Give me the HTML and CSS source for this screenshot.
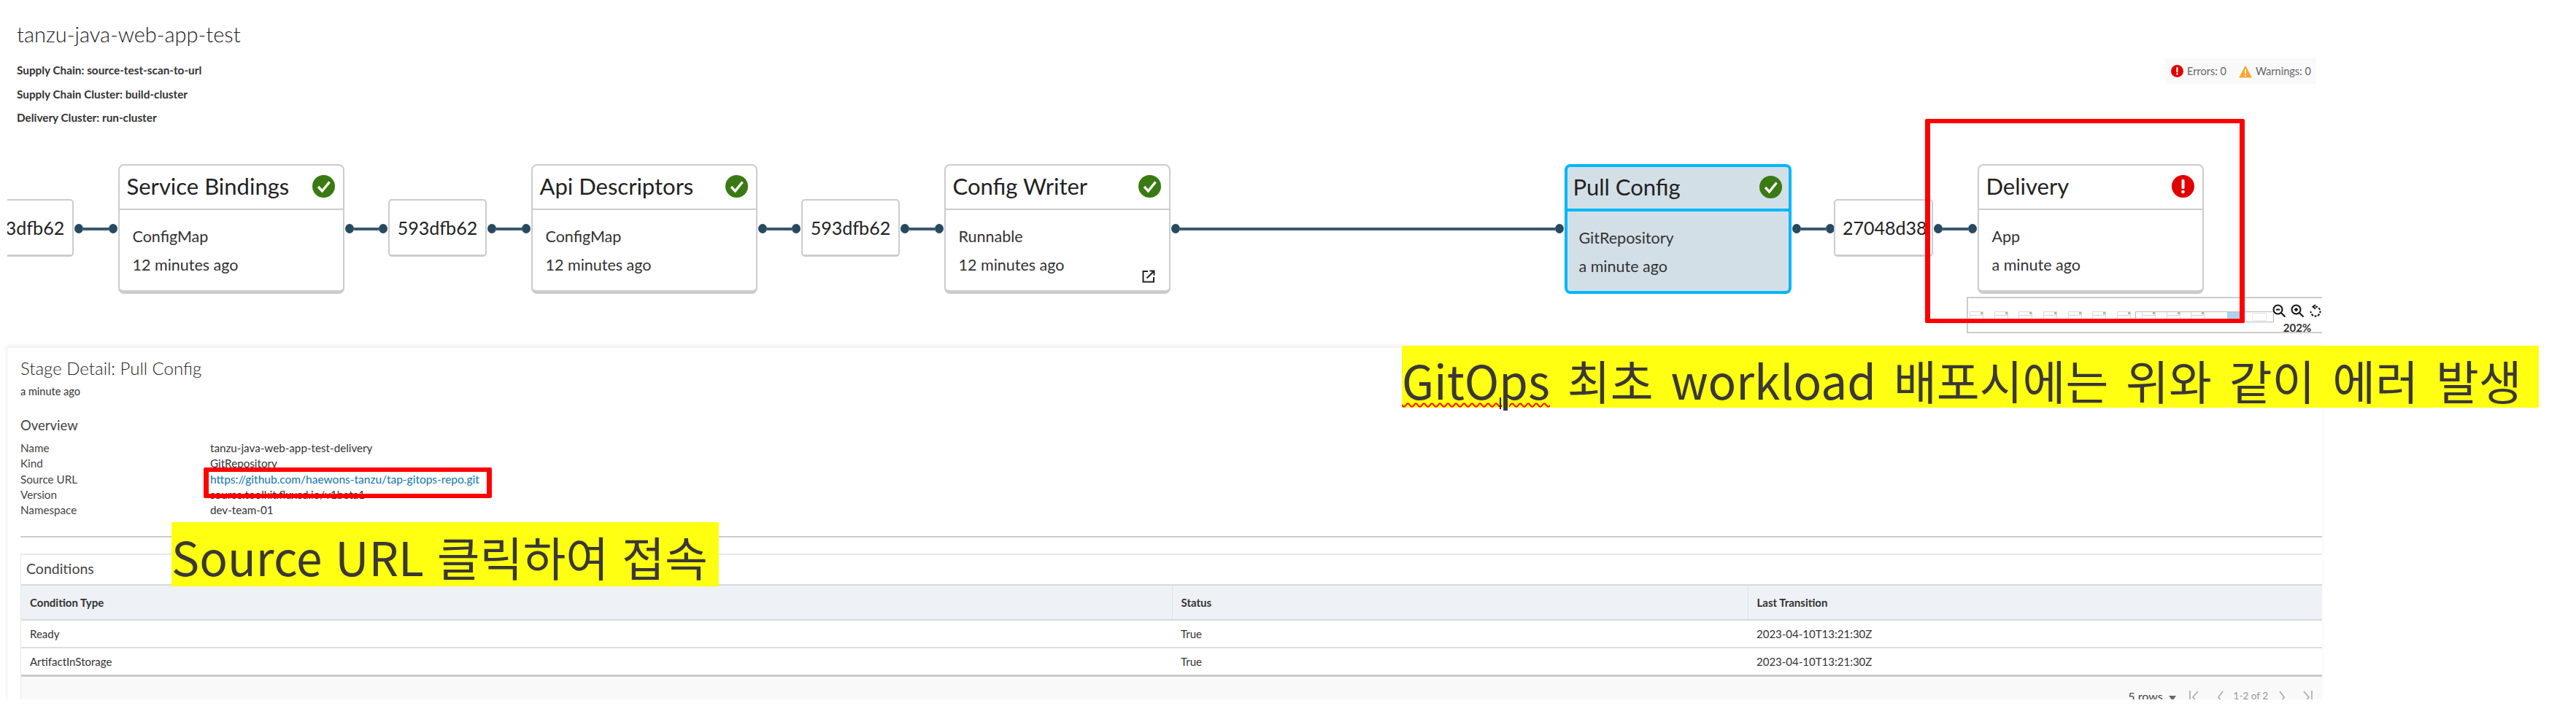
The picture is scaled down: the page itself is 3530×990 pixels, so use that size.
FILE: index.html
```html
<!DOCTYPE html>
<html lang="en">
<head>
    <meta charset="UTF-8">
    <title>tanzu-java-web-app-test</title>
    <link rel="stylesheet" href="styles.css">
</head>
<body>
    <svg class="defs" width="0" height="0">
        <symbol id="ok" viewBox="0 0 31 31">
            <circle cx="15.5" cy="15.5" r="15.5" fill="#3a7a12"/>
            <path d="M8 16l5.5 6L23.5 9.5" fill="none" stroke="#fff" stroke-width="3.4"/>
        </symbol>
        <symbol id="err" viewBox="0 0 31 31">
            <circle cx="15.5" cy="15.5" r="15.5" fill="#e10000"/>
            <rect x="13.5" y="6" width="4" height="13" rx="1.5" fill="#fff"/>
            <circle cx="15.5" cy="23" r="2.3" fill="#fff"/>
        </symbol>
    </svg>

    <div class="page">
        <div class="content">
            <header class="top">
                <div>
                    <h1 class="title">tanzu-java-web-app-test</h1>
                    <div class="meta">
                        <p>Supply Chain: source-test-scan-to-url</p>
                        <p>Supply Chain Cluster: build-cluster</p>
                        <p>Delivery Cluster: run-cluster</p>
                    </div>
                </div>
                <div class="counts">
                    <svg class="count-icon" viewBox="0 0 31 31"><use href="#err"/></svg>
                    <span>Errors: 0</span>
                    <svg class="count-icon warn" viewBox="0 0 18 18">
                        <path d="M9 0.5L17.8 17.5H0.2z" fill="#f9a62b"/>
                        <rect x="8.2" y="6" width="1.6" height="6.5" fill="#fff"/>
                        <rect x="8.2" y="14" width="1.6" height="1.7" fill="#fff"/>
                    </svg>
                    <span>Warnings: 0</span>
                </div>
            </header>

            <div class="pipeline">
                <div class="box box-first">593dfb62</div>
                <div class="link"><i></i><b></b><i></i></div>
                <div class="card">
                    <div class="card-head"><span>Service Bindings</span><svg class="state"><use href="#ok"/></svg></div>
                    <div class="card-body"><p>ConfigMap</p><p>12 minutes ago</p></div>
                </div>
                <div class="link"><i></i><b></b><i></i></div>
                <div class="box">593dfb62</div>
                <div class="link"><i></i><b></b><i></i></div>
                <div class="card">
                    <div class="card-head"><span>Api Descriptors</span><svg class="state"><use href="#ok"/></svg></div>
                    <div class="card-body"><p>ConfigMap</p><p>12 minutes ago</p></div>
                </div>
                <div class="link"><i></i><b></b><i></i></div>
                <div class="box">593dfb62</div>
                <div class="link"><i></i><b></b><i></i></div>
                <div class="card">
                    <div class="card-head"><span>Config Writer</span><svg class="state"><use href="#ok"/></svg></div>
                    <div class="card-body"><p>Runnable</p><p>12 minutes ago</p>
                        <svg class="open-link" viewBox="0 0 18 18" fill="none" stroke="#222" stroke-width="2">
                            <path d="M8 2H1.5V16.5H16V10"/>
                            <path d="M6.5 11.5L15.5 2.5M10.5 1.5H16.5V7.5"/>
                        </svg>
                    </div>
                </div>
                <div class="link link-long"><i></i><b></b><i></i></div>
                <div class="card card-selected">
                    <div class="card-head"><span>Pull Config</span><svg class="state"><use href="#ok"/></svg></div>
                    <div class="card-body"><p>GitRepository</p><p>a minute ago</p></div>
                </div>
                <div class="link"><i></i><b></b><i></i></div>
                <div class="box box-clip">27048d38</div>
                <div class="link"><i></i><b></b><i></i></div>
                <div class="card">
                    <div class="card-head"><span>Delivery</span><svg class="state"><use href="#err"/></svg></div>
                    <div class="card-body"><p>App</p><p>a minute ago</p></div>
                </div>
            </div>

            <div class="minimap">
                <div class="mini-nodes">
                    <i></i><i></i><i></i><i></i><i></i><i></i><i></i><i></i><i></i><i></i>
                </div>
                <div class="mini-view"><span class="mini-selected"></span><i class="mini-last"></i></div>
                <div class="mini-tools">
                    <div class="mini-icons">
                        <svg viewBox="0 0 18 18" fill="none" stroke="#111" stroke-width="2"><circle cx="7.5" cy="7.5" r="6"/><path d="M12 12l5.5 5.5M5 7.5h5"/></svg>
                        <svg viewBox="0 0 18 18" fill="none" stroke="#111" stroke-width="2"><circle cx="7.5" cy="7.5" r="6"/><path d="M12 12l5.5 5.5M5 7.5h5M7.5 5v5"/></svg>
                        <svg viewBox="0 0 18 18" fill="none" stroke="#111" stroke-width="2"><path d="M9 3.5a6.5 6.5 0 1 1-6.5 6.5" stroke-dasharray="3 1.6"/><path d="M9 1L5.5 3.5 9 6.5" /></svg>
                    </div>
                    <span class="mini-zoom">202%</span>
                </div>
            </div>

            <section class="panel">
                <h2 class="stage-title">Stage Detail: Pull Config</h2>
                <p class="stage-age">a minute ago</p>
                <h3 class="overview">Overview</h3>
                <dl class="facts">
                    <dt>Name</dt><dd>tanzu-java-web-app-test-delivery</dd>
                    <dt>Kind</dt><dd>GitRepository</dd>
                    <dt>Source URL</dt><dd><a href="#">https://github.com/haewons-tanzu/tap-gitops-repo.git</a></dd>
                    <dt>Version</dt><dd>source.toolkit.fluxcd.io/v1beta1</dd>
                    <dt>Namespace</dt><dd>dev-team-01</dd>
                </dl>
                <hr class="rule">
                <div class="conditions">
                    <h3 class="conditions-title">Conditions</h3>
                    <table class="grid">
                        <colgroup><col class="col-type"><col class="col-status"><col class="col-time"></colgroup>
                        <thead>
                            <tr><th>Condition Type</th><th>Status</th><th>Last Transition</th></tr>
                        </thead>
                        <tbody>
                            <tr><td>Ready</td><td>True</td><td>2023-04-10T13:21:30Z</td></tr>
                            <tr><td>ArtifactInStorage</td><td>True</td><td>2023-04-10T13:21:30Z</td></tr>
                        </tbody>
                    </table>
                    <div class="pager">
                        <span class="rows">5 rows</span>
                        <span class="caret"></span>
                        <svg class="pg pg-first" viewBox="0 0 14 18"><path d="M1 0V18M12 1L5 9l7 8"/></svg>
                        <svg class="pg pg-prev" viewBox="0 0 8 18"><path d="M7 1L1 9l6 8"/></svg>
                        <span class="range">1-2 of 2</span>
                        <svg class="pg pg-next" viewBox="0 0 8 18"><path d="M1 1l6 8-6 8"/></svg>
                        <svg class="pg pg-last" viewBox="0 0 14 18"><path d="M13 0V18M2 1l7 8-7 8"/></svg>
                    </div>
                </div>
            </section>
        </div>

        <!-- notes drawn over the screenshot -->
        <div class="mark mark-delivery"></div>
        <div class="mark mark-url"></div>
        <div class="note note-gitops"><span class="typo">GitOps</span> 최초 workload 배포시에는 위와 같이 에러 발생</div>
        <div class="note note-url">Source URL 클릭하여 접속</div>
        <div class="cursor"></div>
    </div>
</body>
</html>
```

FILE: styles.css
```css
* {
    box-sizing: border-box;
}

body {
    margin: 0;
    background-color: #fff;
    color: #222;
    font-family: Lato, "Noto Sans", sans-serif;
}

p, h1, h2, h3, dl, dd {
    margin: 0;
    font-weight: 400;
}

.defs {
    position: absolute;
}

.page {
    position: relative;
    width: 3530px;
    height: 990px;
    overflow: hidden;
}

.content {
    width: 3182px;
    display: flex;
    flex-direction: column;
}

/* top */
.top {
    height: 225px;
    padding: 30px 8px 0 23px;
    display: flex;
    justify-content: space-between;
    align-items: flex-start;
}

.title {
    font-size: 29px;
    font-weight: 300;
    line-height: 34px;
    color: #222;
}

.meta {
    margin-top: 16px;
    font-size: 15.3px;
    line-height: 32.5px;
    color: #333;
}

.meta p {
    font-weight: 700;
}

.counts {
    width: 207px;
    height: 35px;
    margin-top: 50px;
    padding-left: 8px;
    display: flex;
    align-items: center;
    background-color: #f9f9f9;
    font-size: 14.5px;
    color: #666;
}

.count-icon {
    width: 17px;
    height: 17px;
    margin-right: 5px;
}

.count-icon.warn {
    width: 18px;
    height: 18px;
    margin-left: 17px;
}

/* pipeline */
.pipeline {
    height: 178px;
    margin-left: 10px;
    display: flex;
    align-items: flex-start;
    overflow: hidden;
}

.box {
    flex: 0 0 135px;
    height: 79px;
    margin-top: 48px;
    border: 2px solid #ccc;
    border-bottom-width: 3px;
    border-radius: 5px;
    background-color: #fff;
    font-size: 25px;
    line-height: 74px;
    text-align: center;
    white-space: nowrap;
    overflow: hidden;
}

.box-first {
    margin-left: -44px;
}

.box-clip {
    flex-basis: 136px;
    margin: 48px 0 0 -2px;
    padding-left: 10px;
    text-align: left;
}

.link {
    flex: 0 0 60.5px;
    height: 13px;
    margin-top: 82px;
    padding: 0 1px;
    display: flex;
    align-items: center;
}

.link-long {
    flex-basis: 540px;
}

.link i {
    flex: 0 0 12px;
    height: 13px;
    border-radius: 50%;
    background-color: #274a60;
}

.link b {
    flex: 1;
    height: 4px;
    background-color: #3a596d;
}

.card {
    flex: 0 0 310px;
    height: 178px;
    border: 2px solid #ccc;
    border-bottom-width: 5px;
    border-radius: 8px;
    background-color: #fff;
}

.card-head {
    height: 56px;
    padding: 0 11px 3px 10px;
    display: flex;
    justify-content: space-between;
    align-items: center;
    border-bottom: 2px solid #ccc;
    box-sizing: content-box;
    font-size: 31px;
    color: #222;
}

.state {
    width: 31px;
    height: 31px;
}

.card-body {
    position: relative;
    padding: 17px 0 0 18px;
    font-size: 21.5px;
    line-height: 39px;
    color: #333;
}

.open-link {
    position: absolute;
    right: 19px;
    top: 82px;
    width: 18px;
    height: 18px;
}

.card-selected {
    flex-basis: 311px;
    border: 4px solid #00b7fa;
    background-color: #d3dfe7;
}

.card-selected .card-head {
    height: 54px;
    padding-left: 8px;
    padding-right: 9px;
    border-bottom: 4px solid #00b7fa;
}

.card-selected .card-body {
    padding-left: 16px;
}

/* minimap */
.minimap {
    position: relative;
    width: 487px;
    height: 50px;
    margin-top: 4px;
    align-self: flex-end;
    border: 2px solid #ccc;
    border-right: none;
}

.mini-nodes {
    position: absolute;
    left: 2px;
    top: 18px;
    display: flex;
    gap: 14.7px;
}

.mini-nodes i {
    position: relative;
    width: 19px;
    height: 12px;
    border: 1px solid #d8d8d8;
    background: linear-gradient(#fff 40%, #d8d8d8 40%, #d8d8d8 50%, #fff 50%);
}

.mini-nodes i::after {
    content: "";
    position: absolute;
    right: 0;
    top: 0;
    width: 3px;
    height: 3px;
    background-color: #9ccb85;
}

.mini-view {
    position: absolute;
    left: 229px;
    top: 18px;
    width: 190px;
    height: 15px;
    border: 1px solid #bbb;
}

.mini-selected {
    position: absolute;
    left: 125px;
    top: 0;
    width: 19px;
    height: 13px;
    background-color: #a9d4ec;
}

.mini-last {
    position: absolute;
    left: 159px;
    top: 1px;
    width: 20px;
    height: 11px;
    border: 1px solid #e4e4e4;
}

.mini-tools {
    position: absolute;
    right: 0;
    top: 8px;
    width: 68px;
    text-align: center;
}

.mini-icons {
    display: flex;
    gap: 7px;
}

.mini-icons svg {
    width: 18px;
    height: 18px;
}

.mini-zoom {
    display: block;
    margin-top: 4px;
    font-size: 15px;
    font-weight: 700;
    line-height: 20px;
    color: #333;
}

/* detail panel */
.panel {
    height: 483px;
    margin-left: 9px;
    margin-top: 19px;
    padding: 13px 0 0 18px;
    border-top: 1px solid #f0f0f0;
    border-left: 1px solid #eee;
    box-shadow: 0 -3px 5px #f4f4f4;
    overflow: hidden;
    color: #333;
}

.stage-title {
    font-size: 24px;
    font-weight: 300;
    line-height: 30px;
    color: #222;
}

.stage-age {
    margin-top: 7px;
    font-size: 14.5px;
    line-height: 20px;
}

.overview {
    margin-top: 23px;
    font-size: 18.5px;
    line-height: 26px;
    color: #444;
}

.facts {
    margin-top: 8px;
    display: grid;
    grid-template-columns: 260px 1fr;
    grid-auto-rows: 21.25px;
    font-size: 15.2px;
    line-height: 21.25px;
}

.facts dt {
    color: #444;
}

.facts a {
    color: #0f76b0;
    font-size: 15.5px;
    text-decoration: none;
}

.rule {
    height: 2px;
    margin: 25px 0 0;
    border: none;
    background-color: #ccc;
}

.conditions {
    margin-top: 22px;
    border-top: 2px solid #e8e8e8;
    border-left: 1px solid #e8e8e8;
}

.conditions-title {
    height: 40px;
    padding-left: 7px;
    font-size: 19.5px;
    line-height: 38px;
    color: #444;
}

.grid {
    width: 100%;
    table-layout: fixed;
    border-collapse: collapse;
    font-size: 15px;
}

.col-type {
    width: 1577px;
}

.col-status,
.col-time {
    width: 789px;
}

.grid th {
    height: 48px;
    padding: 0 12px;
    border-top: 2px solid #d7dadd;
    border-bottom: 2px solid #d7dadd;
    border-left: 1px solid #dfe2e5;
    background-color: #eef1f5;
    font-weight: 700;
    text-align: left;
}

.grid th:first-child {
    border-left: none;
}

.grid td {
    height: 38px;
    padding: 0 12px;
    border-bottom: 2px solid #dcdfe2;
}

.grid tr:last-child td {
    border-bottom: 3px solid #c8ccd0;
}

.pager {
    height: 34px;
    padding: 19px 13px 0 0;
    display: flex;
    justify-content: flex-end;
    align-items: flex-start;
    background-color: #f9f9f9;
    overflow: hidden;
    font-size: 16px;
    color: #444;
}

.rows {
    line-height: 15px;
    margin-right: 8px;
}

.caret {
    width: 0;
    height: 0;
    margin: 7px 18px 0 0;
    border: 5px solid transparent;
    border-top: 7px solid #666;
    border-bottom: none;
}

.pg {
    height: 18px;
    fill: none;
    stroke: #aaa;
    stroke-width: 1.6;
}

.pg-first,
.pg-last {
    width: 14px;
}

.pg-prev,
.pg-next {
    width: 8px;
}

.pg-first {
    margin-right: 25px;
}

.pg-next {
    margin-right: 24px;
}

.range {
    margin: 0 15px 0 14px;
    font-size: 13.5px;
    line-height: 15px;
    color: #999;
}

/* annotations */
.mark {
    position: absolute;
    border: 6px solid #ff0000;
    border-left-width: 7px;
    border-right-width: 7px;
    border-radius: 2px;
}

.mark-delivery {
    left: 2638px;
    top: 163px;
    width: 438px;
    height: 280px;
}

.mark-url {
    left: 279px;
    top: 641px;
    width: 395px;
    height: 42px;
}

.note {
    position: absolute;
    background-color: #ffff12;
    color: #3a3838;
    font-family: "Noto Sans CJK KR", sans-serif;
    white-space: nowrap;
}

.note-gitops {
    left: 1921px;
    top: 474px;
    width: 1558px;
    height: 85px;
    font-size: 64px;
    line-height: 92px;
    word-spacing: 9.5px;
}

.note-url {
    left: 235px;
    top: 716px;
    width: 750px;
    height: 88px;
    font-size: 64px;
    line-height: 92px;
    word-spacing: 3.5px;
}

.typo {
    text-decoration: underline wavy #ff0000 2px;
    text-underline-offset: 4px;
}

.cursor {
    position: absolute;
    left: 2055px;
    top: 545px;
    width: 2px;
    height: 16px;
    background-color: #222;
}
```
